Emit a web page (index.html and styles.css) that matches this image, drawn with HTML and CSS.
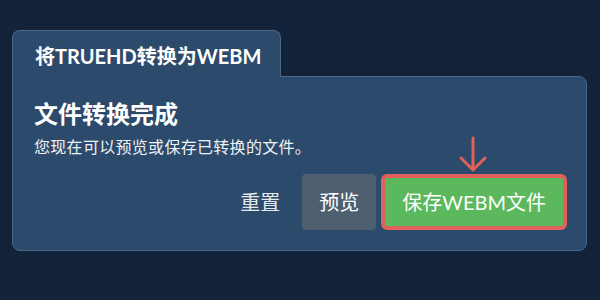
FILE: index.html
```html
<!DOCTYPE html>
<html lang="zh-CN">
<head>
  <meta charset="UTF-8">
  <meta name="viewport" content="width=device-width, initial-scale=1.0">
  <link rel="stylesheet" href="styles.css">
</head>
<body>
  <div class="panel">
    <div class="tab">将TRUEHD转换为WEBM</div>
    <div class="card">
      <h2 class="card-title">文件转换完成</h2>
      <p class="card-text">您现在可以预览或保存已转换的文件。</p>
      <div class="actions">
        <button class="btn btn-link">重置</button>
        <button class="btn btn-gray">预览</button>
        <div class="save-wrap">
          <!-- hint arrow over the save button -->
          <svg class="hint-arrow" width="30" height="36" viewBox="0 0 30 36">
            <path d="M15 2 V34 M3 22 L15 34 L27 22" fill="none" stroke="#e0605a" stroke-width="3" stroke-linecap="round" stroke-linejoin="round"/>
          </svg>
          <button class="btn btn-save">保存WEBM文件</button>
        </div>
      </div>
    </div>
  </div>
</body>
</html>
```

FILE: styles.css
```css
body {
  margin: 0;
  padding: 30px 13px 0 12px;
  font-family: Lato, "Noto Sans CJK SC", sans-serif;
  background-color: #12233a; /* dark navy */
  color: #ffffff;
}

.panel {
  display: flex;
  flex-direction: column;
  align-items: flex-start;
}

.tab {
  position: relative; /* sits over the card's top border */
  z-index: 1;
  height: 47px;
  box-sizing: border-box;
  padding: 2px 19px 0 22px;
  display: flex;
  align-items: center;
  font-size: 20px;
  font-weight: bold;
  background-color: #2c4a6b;
  border: 1px solid #4b6788;
  border-bottom: none;
  border-top-left-radius: 8px;
  border-top-right-radius: 8px;
  margin-bottom: -1px;
}

.card {
  align-self: stretch;
  background-color: #2c4a6b;
  border: 1px solid #4b6788;
  border-radius: 0 8px 8px 8px;
  padding: 23px 19px 20px 21px;
}

.card-title {
  margin: 0;
  font-size: 24px;
  font-weight: bold;
  line-height: 1.2;
}

.card-text {
  margin: 6px 0 0;
  font-size: 16px;
  line-height: 1.5;
  letter-spacing: 0.3px;
  color: #eef2f6;
}

.actions {
  margin-top: 15px;
  display: flex;
  justify-content: flex-end;
  align-items: center;
  gap: 5px;
}

.btn {
  font-family: Lato, "Noto Sans CJK SC", sans-serif;
  font-size: 20px;
  line-height: 24px;
  color: #ffffff;
  border: none;
  border-radius: 4px;
  padding: 16px 17px;
  cursor: pointer;
  background: none;
}

.btn-link {
  color: #e4e9ef;
}

.btn-gray {
  background-color: #4e5f70;
}

.save-wrap {
  position: relative;
}

.btn-save {
  display: block;
  background-color: #5cb85c;
  border: 4px solid #e0605a;
  border-radius: 6px;
  padding: 12px 17px;
}

.hint-arrow {
  position: absolute;
  left: 50%;
  bottom: 100%;
  margin-left: -16px;
  margin-bottom: 2px;
}
```
